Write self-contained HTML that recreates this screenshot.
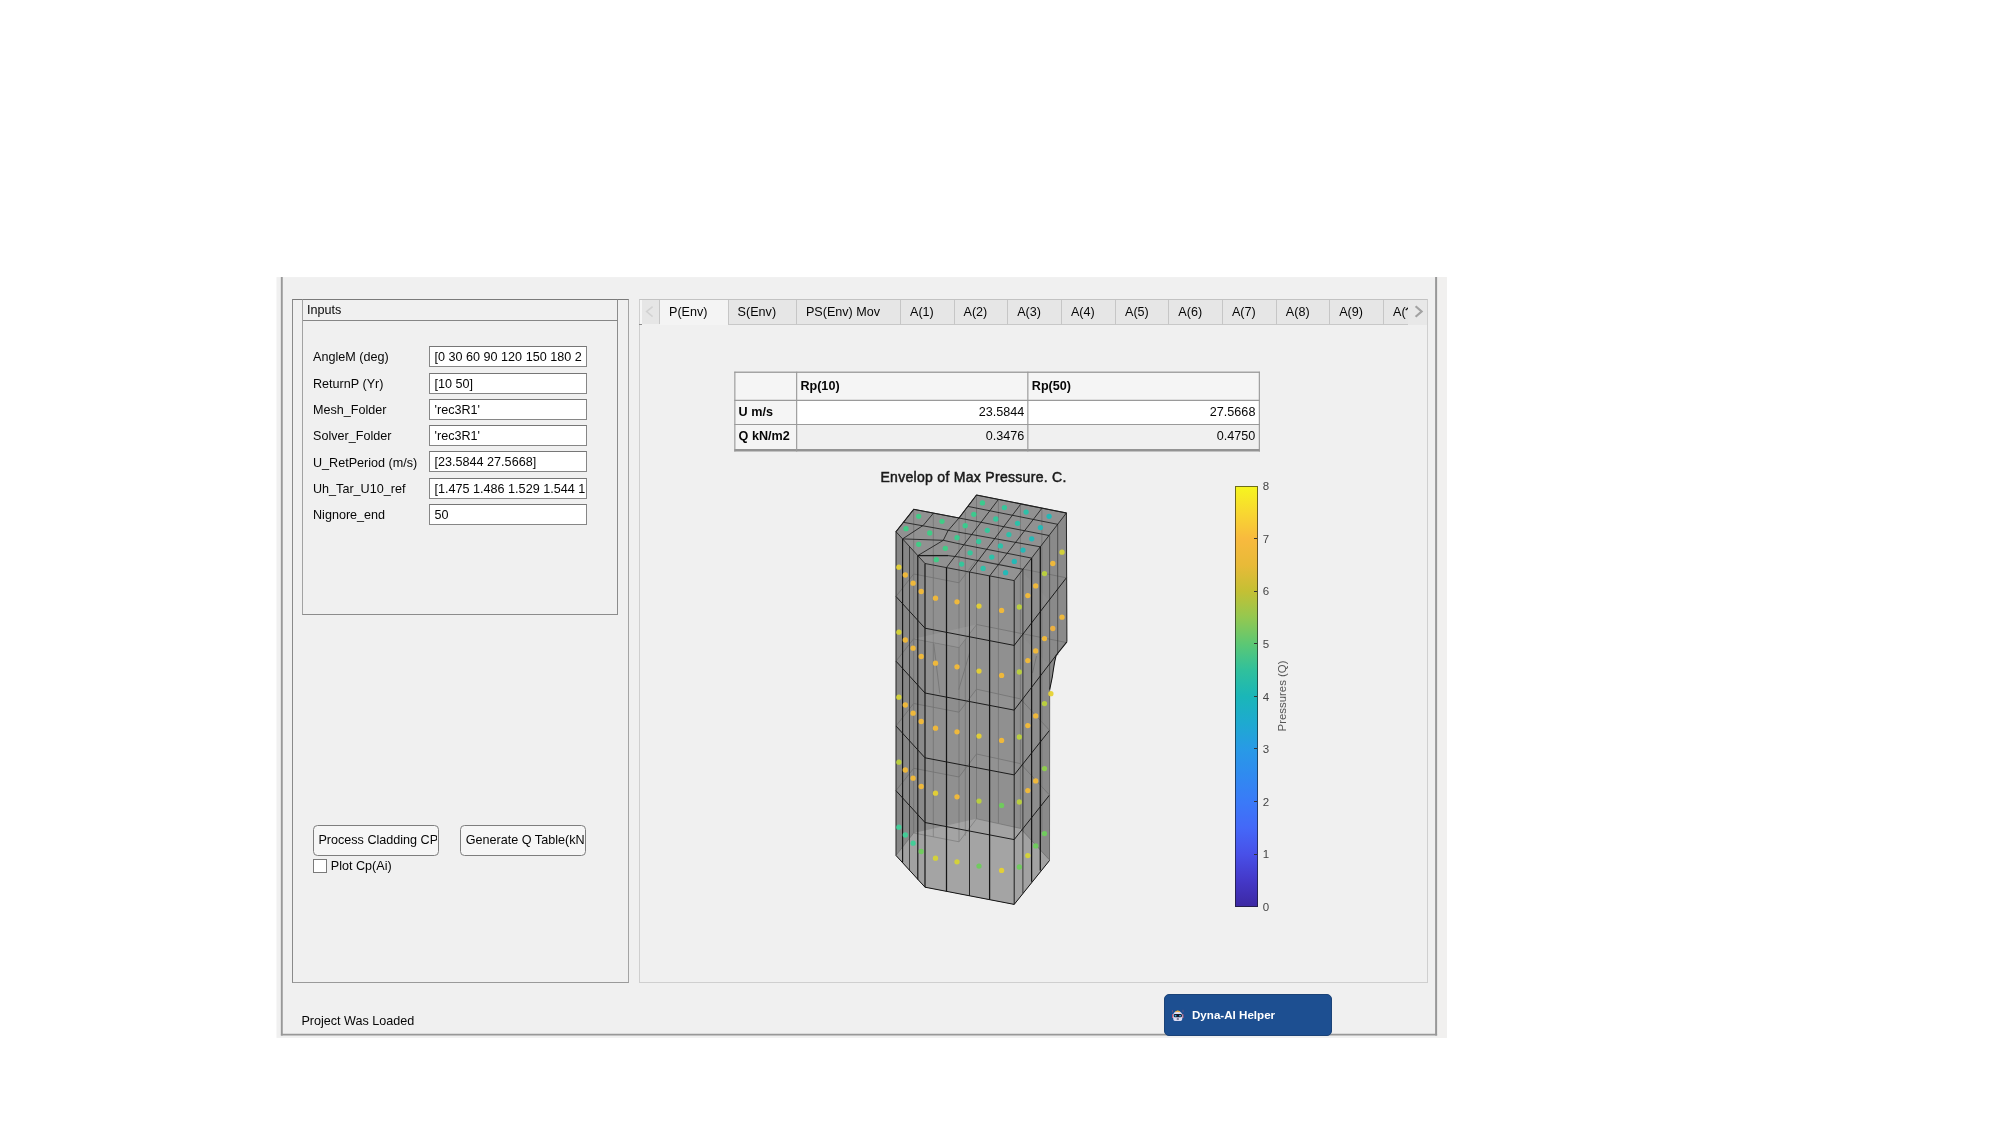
<!DOCTYPE html>
<html><head><meta charset="utf-8"><title>App</title>
<style>
html,body{margin:0;padding:0;background:#fff;}
body{width:2001px;height:1125px;position:relative;overflow:hidden;will-change:transform;font-family:"Liberation Sans",sans-serif;font-size:12.6px;color:#060606;}
.abs{position:absolute;}
#win{position:absolute;left:277px;top:277px;width:1170px;height:761px;background:#f0f0f0;}
.lbl{position:absolute;height:18.8px;line-height:18.8px;white-space:nowrap;margin-top:2.3px;}
.inp{position:absolute;width:157.8px;height:21px;box-sizing:border-box;border:1.2px solid #868686;border-top-color:#767676;background:#fff;overflow:hidden;white-space:nowrap;}
.inp span{position:absolute;left:4.8px;top:1.1px;line-height:18.8px;}
.tab{position:absolute;top:300.2px;height:24.9px;box-sizing:border-box;background:#e6e6e6;border-right:1px solid #c6c6c6;border-bottom:1px solid #c8c8c8;padding-left:9px;line-height:24px;white-space:nowrap;overflow:hidden;}
.tab.last{border-right:none;}
.tab.act{background:#f4f4f4;border-bottom:none;height:24.9px;}
.btn{position:absolute;top:825.4px;height:30.8px;width:126px;box-sizing:border-box;border:1.1px solid #7e7e7e;border-radius:4.5px;background:#f6f6f6;line-height:29.4px;white-space:nowrap;overflow:hidden;}
.bi{position:absolute;left:4.4px;right:1.4px;top:0;bottom:0;overflow:hidden;white-space:nowrap;}
.cbl{position:absolute;font-size:11.5px;line-height:14px;color:#444;}
.cbt{position:absolute;left:1232px;top:689px;width:100px;height:14px;line-height:14px;text-align:center;font-size:11.4px;color:#555;transform:rotate(-90deg);transform-origin:50% 50%;white-space:nowrap;}
.tc{position:absolute;height:20px;line-height:20px;white-space:nowrap;}
.tc.b{font-weight:bold;}
.tc.r{text-align:right;}
table.t{position:absolute;left:734.3px;top:371.8px;border-collapse:collapse;table-layout:fixed;}
table.t td{border:1.1px solid #9c9c9c;padding:0;box-sizing:border-box;white-space:nowrap;}
td.h{background:#f5f5f5;font-weight:bold;text-align:left;padding-left:3.6px !important;}
td.v{text-align:right;padding-right:3.4px !important;}
</style></head><body>
<svg class="abs" style="left:0;top:0" width="2001" height="1125" viewBox="0 0 2001 1125">
<rect x="276.5" y="277.1" width="1170.4" height="760.8" fill="#f0f0f0"/>
<rect x="1437.2" y="277.1" width="9.7" height="760.8" fill="#f1f0ef"/>
<line x1="281.8" y1="277.1" x2="281.8" y2="1035.4" stroke="#989898" stroke-width="1.9"/>
<line x1="1436.1" y1="277.1" x2="1436.1" y2="1035.4" stroke="#989898" stroke-width="2.0"/>
<line x1="280.9" y1="1034.7" x2="1437.1" y2="1034.7" stroke="#989898" stroke-width="1.7"/>
</svg>
<!-- left outer panel -->
<div class="abs" style="left:292.2px;top:299px;width:336.4px;height:683.6px;box-sizing:border-box;border:1.2px solid #8a8a8a;border-top-color:#7a7a7a;border-right-color:#a4a4a4;border-bottom-color:#9a9a9a"></div>
<!-- Inputs panel -->
<div class="abs" style="left:302.4px;top:299px;width:316px;height:316px;box-sizing:border-box;border:1.2px solid #8c8c8c;border-top-color:#7a7a7a;border-left-color:#a2a2a2"></div>
<div class="abs" style="left:303px;top:320px;width:315px;height:1.1px;background:#868686"></div>
<div class="abs" style="left:306.9px;top:299.6px;height:20px;line-height:20px">Inputs</div>
<div class="lbl" style="left:313px;top:346.2px">AngleM (deg)</div>
<div class="inp" style="left:428.8px;top:346.2px"><span>[0 30 60 90 120 150 180 2</span></div>
<div class="lbl" style="left:313px;top:372.5px">ReturnP (Yr)</div>
<div class="inp" style="left:428.8px;top:372.5px"><span>[10 50]</span></div>
<div class="lbl" style="left:313px;top:398.7px">Mesh_Folder</div>
<div class="inp" style="left:428.8px;top:398.7px"><span>'rec3R1'</span></div>
<div class="lbl" style="left:313px;top:425.0px">Solver_Folder</div>
<div class="inp" style="left:428.8px;top:425.0px"><span>'rec3R1'</span></div>
<div class="lbl" style="left:313px;top:451.3px">U_RetPeriod (m/s)</div>
<div class="inp" style="left:428.8px;top:451.3px"><span>[23.5844 27.5668]</span></div>
<div class="lbl" style="left:313px;top:477.5px">Uh_Tar_U10_ref</div>
<div class="inp" style="left:428.8px;top:477.5px"><span>[1.475 1.486 1.529 1.544 1</span></div>
<div class="lbl" style="left:313px;top:503.8px">Nignore_end</div>
<div class="inp" style="left:428.8px;top:503.8px"><span>50</span></div>

<div class="btn" style="left:313px"><div class="bi">Process Cladding CP</div></div>
<div class="btn" style="left:460.4px"><div class="bi">Generate Q Table(kN</div></div>
<div class="abs" style="left:313.1px;top:858.6px;width:14.4px;height:14.2px;box-sizing:border-box;border:1.1px solid #7a7a7a;background:#fff"></div>
<div class="abs" style="left:330.8px;top:856px;height:20px;line-height:20px">Plot Cp(Ai)</div>

<div class="abs" style="left:301.4px;top:1010.9px;height:20px;line-height:20px">Project Was Loaded</div>

<!-- tab group -->
<div class="abs" style="left:639.3px;top:299.3px;width:788.6px;height:683.4px;box-sizing:border-box;border:1px solid #cfcfcf;border-top-color:#c2c2c2"></div>
<div class="abs" style="left:640.3px;top:300.2px;width:20.2px;height:23.6px;background:#e6e6e6;border-right:1px solid #c6c6c6;box-sizing:border-box"></div>
<div class="abs" style="left:640.3px;top:300.2px;width:1.3px;height:23.4px;background:#f6f6f6"></div>
<div class="abs" style="left:639.4px;top:323.5px;width:2.4px;height:1.4px;background:#8a8a8a"></div>
<svg class="abs" style="left:640px;top:300px" width="20" height="24" viewBox="0 0 20 24"><polyline points="12.6,6.6 6.6,11.6 12.6,16.6" fill="none" stroke="#d2d2d2" stroke-width="1.5"/></svg>
<div class="tab act" style="left:660.0px;width:68.6px">P(Env)</div>
<div class="tab" style="left:728.6px;width:68.3px">S(Env)</div>
<div class="tab" style="left:796.9px;width:104.1px">PS(Env) Mov</div>
<div class="tab" style="left:901.0px;width:53.5px">A(1)</div>
<div class="tab" style="left:954.5px;width:53.7px">A(2)</div>
<div class="tab" style="left:1008.2px;width:53.7px">A(3)</div>
<div class="tab" style="left:1061.9px;width:54.1px">A(4)</div>
<div class="tab" style="left:1116.0px;width:53.3px">A(5)</div>
<div class="tab" style="left:1169.3px;width:53.6px">A(6)</div>
<div class="tab" style="left:1222.9px;width:53.9px">A(7)</div>
<div class="tab" style="left:1276.8px;width:53.4px">A(8)</div>
<div class="tab" style="left:1330.2px;width:53.8px">A(9)</div>
<div class="tab last" style="left:1384.0px;width:24.4px">A(</div>
<svg class="abs" style="left:1400px;top:304px" width="10" height="10" viewBox="0 0 10 10"><line x1="5.7" y1="5.9" x2="8.4" y2="3.7" stroke="#111" stroke-width="1.35"/></svg>
<div class="abs" style="left:1408.4px;top:300.2px;width:18.6px;height:24.4px;background:#e8e8e8"></div>
<svg class="abs" style="left:1408px;top:300px" width="20" height="24" viewBox="0 0 20 24"><polyline points="7.6,6.2 13.6,11.5 7.6,16.8" fill="none" stroke="#a2a2a2" stroke-width="2.2"/></svg>

<!-- table -->
<div class="abs" style="left:734.3px;top:371.7px;width:525.6px;height:79.6px;background:#f0f0f0"></div>
<div class="abs" style="left:734.3px;top:371.7px;width:525.6px;height:28.6px;background:#f5f5f5"></div>
<div class="abs" style="left:734.3px;top:371.7px;width:62.3px;height:79px;background:#f5f5f5"></div>
<div class="abs" style="left:796.6px;top:400.3px;width:462.8px;height:24.2px;background:#fff"></div>
<svg class="abs" style="left:0;top:0" width="2001" height="1125" viewBox="0 0 2001 1125" fill="none" stroke="#9a9a9a" stroke-width="1.15">
<line x1="734.3" y1="372.25" x2="1259.9" y2="372.25" stroke="#a4a4a4" stroke-width="1.3"/>
<line x1="734.3" y1="400.35" x2="1259.9" y2="400.35"/>
<line x1="734.3" y1="424.5" x2="1259.9" y2="424.5"/>
<line x1="734.3" y1="450.3" x2="1259.9" y2="450.3" stroke="#939393" stroke-width="2.6"/>
<line x1="734.85" y1="371.7" x2="734.85" y2="451.6"/>
<line x1="796.65" y1="371.7" x2="796.65" y2="451.6"/>
<line x1="1027.85" y1="371.7" x2="1027.85" y2="451.6"/>
<line x1="1259.35" y1="371.7" x2="1259.35" y2="451.6"/>
</svg>
<div class="tc b" style="left:800.4px;top:376.2px">Rp(10)</div>
<div class="tc b" style="left:1031.8px;top:376.2px">Rp(50)</div>
<div class="tc b" style="left:738.6px;top:401.9px">U m/s</div>
<div class="tc b" style="left:738.6px;top:426.1px">Q kN/m2</div>
<div class="tc r" style="left:900px;top:401.9px;width:124.2px">23.5844</div>
<div class="tc r" style="left:900px;top:426.1px;width:124.2px">0.3476</div>
<div class="tc r" style="left:1131px;top:401.9px;width:124.4px">27.5668</div>
<div class="tc r" style="left:1131px;top:426.1px;width:124.4px">0.4750</div>

<!-- axes title -->
<div class="abs" style="left:873.6px;top:468.2px;width:200px;height:18px;line-height:18px;text-align:center;font-weight:normal;font-size:14px;letter-spacing:0.3px;-webkit-text-stroke:0.5px #1a1a1a;color:#1a1a1a;white-space:nowrap">Envelop of Max Pressure. C.</div>

<!-- building -->
<svg class="abs" style="left:0;top:0" width="2001" height="1125" viewBox="0 0 2001 1125">
<polygon points="913.7,509.3 959.0,518.0 976.5,495.0 1066.4,513.0 1066.9,641.8 1056.2,655.2 1054.7,661.7 1053.4,669.5 1052.3,677.0 1049.7,689.6 1049.5,860.5 1014.2,904.4 925.0,887.2 896.0,855.5 896.0,531.7" fill="#8d8d8d"/>
<polygon points="896.0,531.7 925.0,563.5 925.0,887.2 896.0,855.5" fill="#878787"/>
<polygon points="925.0,563.5 1014.2,580.6 1014.2,904.4 925.0,887.2" fill="#8e8e8e"/>
<polygon points="1014.2,580.6 1066.4,513.0 1066.9,641.8 1056.2,655.2 1054.7,661.7 1053.4,669.5 1052.3,677.0 1049.7,689.6 1049.5,860.5 1014.2,904.4" fill="#8a8a8a"/>
<polygon points="913.7,509.3 959.0,518.0 976.5,495.0 1066.4,513.0 1014.2,580.6 925.0,563.5 896.0,531.7" fill="#919191"/>
<polygon points="896.0,855.5 913.7,833.0 976.5,818.8 1020.4,828.4 1049.5,860.5 1014.2,904.4 925.0,887.2" fill="#b2b2b2" opacity="0.62"/>
<polygon points="896.0,596.5 913.7,574.0 959.0,582.8 976.5,559.8 1020.4,569.4 1049.0,600.3 1014.2,645.4 925.0,628.2" fill="#a0a0a0" opacity="0.13"/>
<polygon points="896.0,661.2 913.7,638.8 959.0,647.5 976.5,624.5 1020.4,634.1 1049.0,665.0 1014.2,710.1 925.0,693.0" fill="#a0a0a0" opacity="0.13"/>
<polygon points="896.0,726.0 913.7,703.5 959.0,712.2 976.5,689.2 1020.4,698.9 1049.0,729.8 1014.2,774.9 925.0,757.8" fill="#a0a0a0" opacity="0.13"/>
<polygon points="896.0,790.7 913.7,768.3 959.0,777.0 976.5,754.0 1020.4,763.6 1049.0,794.5 1014.2,839.6 925.0,822.5" fill="#a0a0a0" opacity="0.13"/>
<g stroke="#444" stroke-width="0.8" fill="none" opacity="0.38"><line x1="913.7" y1="509.3" x2="913.7" y2="833.0"/><line x1="933.3" y1="513.3" x2="933.3" y2="837.0"/><line x1="959.0" y1="518.0" x2="959.0" y2="841.8"/><line x1="976.5" y1="495.0" x2="976.5" y2="818.8"/><line x1="998.4" y1="499.5" x2="998.4" y2="823.2"/><line x1="1020.4" y1="504.6" x2="1020.4" y2="828.4"/><line x1="1041.9" y1="508.3" x2="1041.9" y2="832.0"/><line x1="965.3" y1="512.0" x2="965.3" y2="835.8"/><polyline points="896.0,596.5 913.7,574.0 959.0,582.8 976.5,559.8 1066.4,577.8"/><polyline points="896.0,661.2 913.7,638.8 959.0,647.5 976.5,624.5 1066.4,642.5"/><polyline points="896.0,726.0 913.7,703.5 959.0,712.2 976.5,689.2 1020.4,698.9 1049.0,729.8"/><polyline points="896.0,790.7 913.7,768.3 959.0,777.0 976.5,754.0 1020.4,763.6 1049.0,794.5"/><polyline points="896.0,855.5 913.7,833.0 959.0,841.8 976.5,818.8 1020.4,828.4 1049.0,859.3"/><line x1="933.8" y1="643.9" x2="939.8" y2="693.6"/><line x1="969.6" y1="652.8" x2="958.7" y2="689.7"/><line x1="1036.5" y1="656" x2="1032.5" y2="673"/></g>
<polygon points="913.7,638.8 959.0,647.5 976.5,624.5" fill="#a6a6a6" opacity="0.35"/>
<line x1="902.6" y1="538.9" x2="902.6" y2="862.6" stroke="#151515" stroke-width="1.15"/><line x1="909.5" y1="546.5" x2="909.5" y2="870.2" stroke="#2a2a2a" stroke-width="0.80"/><line x1="917.8" y1="555.6" x2="917.8" y2="879.4" stroke="#151515" stroke-width="1.15"/><line x1="925.0" y1="563.5" x2="925.0" y2="887.2" stroke="#151515" stroke-width="1.20"/><line x1="946.5" y1="567.5" x2="946.5" y2="891.2" stroke="#151515" stroke-width="1.25"/><line x1="969.5" y1="572.0" x2="969.5" y2="895.8" stroke="#151515" stroke-width="0.90"/><line x1="989.6" y1="576.0" x2="989.6" y2="899.8" stroke="#151515" stroke-width="1.25"/><line x1="1014.2" y1="580.6" x2="1014.2" y2="904.4" stroke="#151515" stroke-width="0.95"/><line x1="1022.9" y1="569.3" x2="1022.9" y2="893.1" stroke="#151515" stroke-width="0.75"/><line x1="1031.6" y1="558.1" x2="1031.6" y2="881.8" stroke="#151515" stroke-width="1.25"/><line x1="1040.3" y1="546.8" x2="1040.3" y2="870.5" stroke="#151515" stroke-width="1.25"/><line x1="1049.6" y1="535.5" x2="1049.6" y2="689.6" stroke="#3a3a3a" stroke-width="0.70"/><line x1="1057.7" y1="524.3" x2="1057.7" y2="655.2" stroke="#3a3a3a" stroke-width="0.75"/>
<g stroke="#151515" stroke-width="0.95" fill="none"><polyline points="896.0,596.5 925.0,628.2 1014.2,645.4"/><polyline points="1014.2,645.4 1066.4,577.8"/><polyline points="896.0,661.2 925.0,693.0 1014.2,710.1"/><polyline points="1014.2,710.1 1056.2,655.2"/><polyline points="896.0,726.0 925.0,757.8 1014.2,774.9"/><polyline points="1014.2,774.9 1049.5,730.4"/><polyline points="896.0,790.7 925.0,822.5 1014.2,839.6"/><polyline points="1014.2,839.6 1049.5,795.1"/></g>
<polyline points="896.0,855.5 896.0,531.7 913.7,509.3 959.0,518.0 976.5,495.0 1066.4,513.0 1066.9,641.8" fill="none" stroke="#2a2a2a" stroke-width="1.05"/>
<polyline points="1049.7,689.6 1049.5,860.5" fill="none" stroke="#505050" stroke-width="0.7"/>
<polyline points="896.0,855.5 925.0,887.2 1014.2,904.4 1049.5,860.5" fill="none" stroke="#151515" stroke-width="1.0"/>
<polyline points="1066.9,641.8 1056.2,655.2 1054.7,661.7 1053.4,669.5 1052.3,677.0 1049.7,689.6" fill="none" stroke="#151515" stroke-width="1.05"/>
<g stroke="#1c1c1c" stroke-width="0.85" fill="none"><polyline points="976.5,495.0 1066.4,513.0"/><polyline points="967.9,506.4 1057.7,524.3"/><polyline points="913.7,509.3 959.0,518.0 1049.0,535.5"/><polyline points="903.3,522.3 1040.3,546.8"/><polyline points="902.6,538.9 943.3,540.3 963.8,544.8 1031.6,558.1"/><polyline points="917.8,555.6 948.0,555.6" stroke-width="1.30"/><polyline points="948.0,555.6 959.7,557.1 1022.9,569.3"/><polyline points="925.0,563.5 1014.2,580.6"/><polyline points="913.7,509.3 896.0,531.7"/><polyline points="933.3,513.3 923.3,525.3 902.6,538.9"/><polyline points="976.5,495.0 959.0,518.0 948.0,530.7 943.3,540.3 917.8,555.6"/><polyline points="998.4,499.5 946.5,567.5"/><polyline points="1020.4,504.6 969.5,572.0"/><polyline points="1041.9,508.3 989.6,576.0"/><polyline points="1066.4,513.0 1014.2,580.6"/><polyline points="896.0,531.7 902.6,538.9 917.8,555.6 925.0,563.5"/></g>
<circle cx="982.4" cy="502.9" r="2.65" fill="#38cd8e" opacity="0.95"/><circle cx="1004.4" cy="507.7" r="2.65" fill="#30c99c" opacity="0.95"/><circle cx="1026.1" cy="512.1" r="2.65" fill="#28c3aa" opacity="0.95"/><circle cx="1049.1" cy="516.3" r="2.65" fill="#1fbbb8" opacity="0.95"/><circle cx="973.8" cy="514.3" r="2.65" fill="#38cd8e" opacity="0.95"/><circle cx="995.8" cy="519.0" r="2.65" fill="#30c99c" opacity="0.95"/><circle cx="1017.5" cy="523.3" r="2.65" fill="#28c3aa" opacity="0.95"/><circle cx="1040.4" cy="527.6" r="2.65" fill="#1fbbb8" opacity="0.95"/><circle cx="965.2" cy="525.7" r="2.65" fill="#38cd8e" opacity="0.95"/><circle cx="987.3" cy="530.3" r="2.65" fill="#30c99c" opacity="0.95"/><circle cx="1008.9" cy="534.6" r="2.65" fill="#28c3aa" opacity="0.95"/><circle cx="1031.7" cy="538.8" r="2.65" fill="#1fbbb8" opacity="0.95"/><circle cx="978.7" cy="541.5" r="2.65" fill="#30c99c" opacity="0.95"/><circle cx="1000.4" cy="545.9" r="2.65" fill="#28c3aa" opacity="0.95"/><circle cx="1023.0" cy="550.1" r="2.65" fill="#1fbbb8" opacity="0.95"/><circle cx="970.1" cy="552.8" r="2.65" fill="#30c99c" opacity="0.95"/><circle cx="991.8" cy="557.1" r="2.65" fill="#28c3aa" opacity="0.95"/><circle cx="1014.3" cy="561.4" r="2.65" fill="#1fbbb8" opacity="0.95"/><circle cx="961.6" cy="564.1" r="2.65" fill="#30c99c" opacity="0.95"/><circle cx="983.1" cy="568.4" r="2.65" fill="#28c3aa" opacity="0.95"/><circle cx="1005.6" cy="572.7" r="2.65" fill="#1fbbb8" opacity="0.95"/><circle cx="918.7" cy="516.3" r="2.65" fill="#3dcf86" opacity="0.95"/><circle cx="942.0" cy="521.3" r="2.65" fill="#3dcf86" opacity="0.95"/><circle cx="906.0" cy="528.7" r="2.65" fill="#3dcf86" opacity="0.95"/><circle cx="929.7" cy="533.0" r="2.65" fill="#3dcf86" opacity="0.95"/><circle cx="918.7" cy="544.3" r="2.65" fill="#3dcf86" opacity="0.95"/><circle cx="945.3" cy="548.3" r="2.65" fill="#3dcf86" opacity="0.95"/><circle cx="936.3" cy="559.7" r="2.65" fill="#3dcf86" opacity="0.95"/><circle cx="957.0" cy="537.7" r="2.65" fill="#38cd8e" opacity="0.95"/><circle cx="898.9" cy="567.2" r="2.65" fill="#e6d233" opacity="0.95"/><circle cx="905.3" cy="575.0" r="2.65" fill="#f3bb38" opacity="0.95"/><circle cx="913.1" cy="583.2" r="2.65" fill="#f3bb38" opacity="0.95"/><circle cx="921.2" cy="591.5" r="2.65" fill="#f3bb38" opacity="0.95"/><circle cx="935.5" cy="598.2" r="2.65" fill="#f3bb38" opacity="0.95"/><circle cx="957.0" cy="601.8" r="2.65" fill="#f3bb38" opacity="0.95"/><circle cx="979.0" cy="606.1" r="2.65" fill="#e6d233" opacity="0.95"/><circle cx="1001.6" cy="610.4" r="2.65" fill="#f3bb38" opacity="0.95"/><circle cx="1019.3" cy="607.0" r="2.65" fill="#bcd23c" opacity="0.95"/><circle cx="1027.8" cy="595.6" r="2.65" fill="#f3bb38" opacity="0.95"/><circle cx="1035.7" cy="585.9" r="2.65" fill="#f3bb38" opacity="0.95"/><circle cx="1044.5" cy="573.6" r="2.65" fill="#bcd23c" opacity="0.95"/><circle cx="1052.8" cy="563.5" r="2.65" fill="#f3bb38" opacity="0.95"/><circle cx="1062.0" cy="552.2" r="2.65" fill="#d6d436" opacity="0.95"/><circle cx="898.9" cy="632.2" r="2.65" fill="#d6d436" opacity="0.95"/><circle cx="905.3" cy="640.0" r="2.65" fill="#f3bb38" opacity="0.95"/><circle cx="913.1" cy="648.2" r="2.65" fill="#f3bb38" opacity="0.95"/><circle cx="921.2" cy="656.5" r="2.65" fill="#f3bb38" opacity="0.95"/><circle cx="935.5" cy="663.2" r="2.65" fill="#f3bb38" opacity="0.95"/><circle cx="957.0" cy="666.8" r="2.65" fill="#f3bb38" opacity="0.95"/><circle cx="979.0" cy="671.1" r="2.65" fill="#e6d233" opacity="0.95"/><circle cx="1001.6" cy="675.4" r="2.65" fill="#f3bb38" opacity="0.95"/><circle cx="1019.3" cy="672.0" r="2.65" fill="#bcd23c" opacity="0.95"/><circle cx="1027.8" cy="660.6" r="2.65" fill="#f3bb38" opacity="0.95"/><circle cx="1035.7" cy="650.9" r="2.65" fill="#f3bb38" opacity="0.95"/><circle cx="1044.5" cy="638.6" r="2.65" fill="#f3bb38" opacity="0.95"/><circle cx="1052.8" cy="628.5" r="2.65" fill="#f0b23e" opacity="0.95"/><circle cx="1062.0" cy="617.2" r="2.65" fill="#f3bb38" opacity="0.95"/><circle cx="898.9" cy="697.2" r="2.65" fill="#d6d436" opacity="0.95"/><circle cx="905.3" cy="705.0" r="2.65" fill="#f3bb38" opacity="0.95"/><circle cx="913.1" cy="713.2" r="2.65" fill="#f3bb38" opacity="0.95"/><circle cx="921.2" cy="721.5" r="2.65" fill="#f3bb38" opacity="0.95"/><circle cx="935.5" cy="728.2" r="2.65" fill="#f3bb38" opacity="0.95"/><circle cx="957.0" cy="731.8" r="2.65" fill="#f3bb38" opacity="0.95"/><circle cx="979.0" cy="736.1" r="2.65" fill="#e6d233" opacity="0.95"/><circle cx="1001.6" cy="740.4" r="2.65" fill="#f3bb38" opacity="0.95"/><circle cx="1019.3" cy="737.0" r="2.65" fill="#bcd23c" opacity="0.95"/><circle cx="1027.8" cy="725.6" r="2.65" fill="#f3bb38" opacity="0.95"/><circle cx="1035.7" cy="715.9" r="2.65" fill="#f3bb38" opacity="0.95"/><circle cx="1044.5" cy="703.6" r="2.65" fill="#bcd23c" opacity="0.95"/><circle cx="1050.9" cy="693.7" r="2.65" fill="#e6d233" opacity="0.95"/><circle cx="898.9" cy="762.2" r="2.65" fill="#bcd23c" opacity="0.95"/><circle cx="905.3" cy="770.0" r="2.65" fill="#f3bb38" opacity="0.95"/><circle cx="913.1" cy="778.2" r="2.65" fill="#f3bb38" opacity="0.95"/><circle cx="921.2" cy="786.5" r="2.65" fill="#f3bb38" opacity="0.95"/><circle cx="935.5" cy="793.2" r="2.65" fill="#e6d233" opacity="0.95"/><circle cx="957.0" cy="796.8" r="2.65" fill="#f3bb38" opacity="0.95"/><circle cx="979.0" cy="801.1" r="2.65" fill="#bcd23c" opacity="0.95"/><circle cx="1001.6" cy="805.4" r="2.65" fill="#6fce5c" opacity="0.95"/><circle cx="1019.3" cy="802.0" r="2.65" fill="#bcd23c" opacity="0.95"/><circle cx="1027.8" cy="790.6" r="2.65" fill="#f3bb38" opacity="0.95"/><circle cx="1035.7" cy="780.9" r="2.65" fill="#f3bb38" opacity="0.95"/><circle cx="1044.5" cy="768.6" r="2.65" fill="#8fcf4c" opacity="0.95"/><circle cx="898.9" cy="827.2" r="2.65" fill="#3fcf98" opacity="0.95"/><circle cx="905.3" cy="835.0" r="2.65" fill="#3fcf98" opacity="0.95"/><circle cx="913.1" cy="843.2" r="2.65" fill="#3fcf98" opacity="0.95"/><circle cx="921.2" cy="851.5" r="2.65" fill="#6fce5c" opacity="0.95"/><circle cx="935.5" cy="858.2" r="2.65" fill="#d6d436" opacity="0.95"/><circle cx="957.0" cy="861.8" r="2.65" fill="#d6d436" opacity="0.95"/><circle cx="979.0" cy="866.1" r="2.65" fill="#6fce5c" opacity="0.95"/><circle cx="1001.6" cy="870.4" r="2.65" fill="#e6d233" opacity="0.95"/><circle cx="1019.3" cy="867.0" r="2.65" fill="#6fce5c" opacity="0.95"/><circle cx="1027.8" cy="855.6" r="2.65" fill="#d6d436" opacity="0.95"/><circle cx="1035.7" cy="845.9" r="2.65" fill="#6fce5c" opacity="0.95"/><circle cx="1044.5" cy="833.6" r="2.65" fill="#6fce5c" opacity="0.95"/>
</svg>

<div style="position:absolute;left:1235.2px;top:485.6px;width:23px;height:421.4px;box-sizing:border-box;border:1.2px solid rgba(25,25,25,0.62);background-origin:border-box;background-repeat:no-repeat;background-image:linear-gradient(to bottom,#f6f61e 0.0%,#f7e727 3.1%,#f8d830 6.2%,#f8c937 9.4%,#f8ba3e 12.5%,#f0ba3b 15.6%,#e8ba38 18.8%,#d6bd36 21.9%,#c4c034 25.0%,#acc442 28.1%,#94c850 31.2%,#78c862 34.4%,#5cc874 37.5%,#46c488 40.6%,#30c09c 43.8%,#25bbaa 46.9%,#1ab6b8 50.0%,#1cb0c4 53.1%,#1eaad0 56.2%,#23a2db 59.4%,#289ae6 62.5%,#2c92eb 65.6%,#308af0 68.8%,#3582f4 71.9%,#3a7af8 75.0%,#3f71f8 78.1%,#4468f8 81.2%,#465cf0 84.4%,#4850e8 87.5%,#4644d8 90.6%,#4438c8 93.8%,#4030b5 96.9%,#3c28a2 100.0%)"></div>
<div class="cbl" style="left:1262.8px;top:899.7px">0</div>
<div style="position:absolute;left:1254.2px;top:853.5px;width:3px;height:1px;background:#333"></div>
<div class="cbl" style="left:1262.8px;top:847.2px">1</div>
<div style="position:absolute;left:1254.2px;top:800.9px;width:3px;height:1px;background:#333"></div>
<div class="cbl" style="left:1262.8px;top:794.6px">2</div>
<div style="position:absolute;left:1254.2px;top:748.4px;width:3px;height:1px;background:#333"></div>
<div class="cbl" style="left:1262.8px;top:742.1px">3</div>
<div style="position:absolute;left:1254.2px;top:695.8px;width:3px;height:1px;background:#333"></div>
<div class="cbl" style="left:1262.8px;top:689.5px">4</div>
<div style="position:absolute;left:1254.2px;top:643.2px;width:3px;height:1px;background:#333"></div>
<div class="cbl" style="left:1262.8px;top:637.0px">5</div>
<div style="position:absolute;left:1254.2px;top:590.7px;width:3px;height:1px;background:#333"></div>
<div class="cbl" style="left:1262.8px;top:584.4px">6</div>
<div style="position:absolute;left:1254.2px;top:538.2px;width:3px;height:1px;background:#333"></div>
<div class="cbl" style="left:1262.8px;top:531.9px">7</div>
<div class="cbl" style="left:1262.8px;top:479.3px">8</div>
<div class="cbt">Pressures (Q)</div>

<!-- helper button -->
<div class="abs" style="left:1164.2px;top:994.2px;width:167.8px;height:41.4px;box-sizing:border-box;border-radius:5px;background:#1d4f91;border:1px solid #1b4378"></div>
<svg class="abs" style="left:1170.5px;top:1009.0px" width="13.6" height="13.6" viewBox="0 0 15 15">
 <rect x="1.2" y="5.4" width="1.2" height="4.6" rx="0.6" fill="#d8607c"/><rect x="12.5" y="5.4" width="1.2" height="4.6" rx="0.6" fill="#d8607c"/>
 <rect x="1.2" y="1.2" width="0.7" height="2.6" fill="#c05070" opacity="0.7"/><rect x="12.9" y="0.9" width="0.7" height="2.8" fill="#c05070" opacity="0.7"/>
 <path d="M2.2 8.2 C2.2 4.2 4.4 2.4 7.4 2.4 C10.4 2.4 12.7 4.2 12.7 8.2 L12.3 11.6 Q12.2 13.2 10.6 13.2 L4.3 13.2 Q2.7 13.2 2.6 11.6 Z" fill="#dcdcf4"/>
 <path d="M4.9 3.1 Q7.4 0.9 10.0 3.1 Q7.4 2.3 4.9 3.1 Z" fill="#f2b23a" stroke="#f2b23a" stroke-width="0.8"/>
 <rect x="2.9" y="5.6" width="9.2" height="3.6" rx="1.5" fill="#16182e"/>
 <rect x="4.0" y="6.5" width="2.0" height="1.7" rx="0.5" fill="#36bfe6"/><rect x="9.0" y="6.5" width="2.0" height="1.7" rx="0.5" fill="#36bfe6"/>
 <rect x="6.2" y="10.6" width="2.6" height="0.9" rx="0.4" fill="#2a2a44"/>
</svg>
<div class="abs" style="left:1192px;top:1004.9px;height:20px;line-height:20px;font-weight:bold;font-size:11.6px;color:#fff;white-space:nowrap">Dyna-AI Helper</div>

</body></html>
